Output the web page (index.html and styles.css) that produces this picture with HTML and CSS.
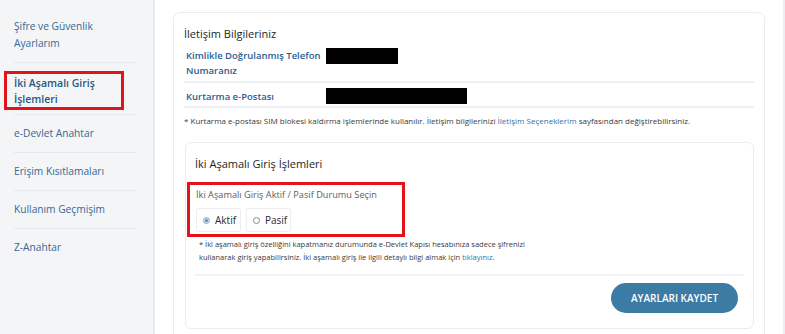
FILE: index.html
```html
<!DOCTYPE html>
<html>
<head>
  <title>Güvenlik Ayarları</title>
  <link rel="stylesheet" href="styles.css">
</head>
<body>
  <div class="sidebar">
    <a class="sideItem" href="#">Şifre ve Güvenlik<br>Ayarlarım</a>
    <div class="sideMarked">
      <a class="sideItem active" href="#">İki Aşamalı Giriş<br>İşlemleri</a>
    </div>
    <a class="sideItem" href="#">e-Devlet Anahtar</a>
    <a class="sideItem" href="#">Erişim Kısıtlamaları</a>
    <a class="sideItem" href="#">Kullanım Geçmişim</a>
    <a class="sideItem last" href="#">Z-Anahtar</a>
  </div>

  <div class="main">
    <div class="outerCard">
      <h3 class="cardTitle">İletişim Bilgileriniz</h3>
      <div class="infoRow">
        <div class="infoLabel">Kimlikle Doğrulanmış Telefon<br>Numaranız</div>
        <div class="infoValue"><span class="masked phoneMask"></span></div>
      </div>
      <div class="infoRow">
        <div class="infoLabel">Kurtarma e-Postası</div>
        <div class="infoValue"><span class="masked mailMask"></span></div>
      </div>
      <p class="note">* Kurtarma e-postası SIM blokesi kaldırma işlemlerinde kullanılır. İletişim bilgilerinizi <a href="#">İletişim Seçeneklerim</a> sayfasından değiştirebilirsiniz.</p>

      <div class="innerCard">
        <h3 class="cardTitle">İki Aşamalı Giriş İşlemleri</h3>
        <div class="markedGroup">
          <div class="groupLabel">İki Aşamalı Giriş Aktif / Pasif Durumu Seçin</div>
          <div class="radios">
            <label class="radioBox"><span class="dot checked"></span>Aktif</label>
            <label class="radioBox"><span class="dot"></span>Pasif</label>
          </div>
        </div>
        <p class="note twoStep">* İki aşamalı giriş özelliğini kapatmanız durumunda e-Devlet Kapısı hesabınıza sadece şifrenizi<br>kullanarak giriş yapabilirsiniz. İki aşamalı giriş ile ilgili detaylı bilgi almak için <a href="#">tıklayınız</a>.</p>
        <div class="actions">
          <button type="button">AYARLARI KAYDET</button>
        </div>
      </div>
    </div>
  </div>
</body>
</html>
```

FILE: styles.css
```css
body {
  margin: 0;
  display: flex;
  min-height: 100vh;
  font-family: "Open Sans", "DejaVu Sans", sans-serif;
  color: #333;
  background-color: #fff;
  overflow: hidden;
}

a {
  text-decoration: none;
}

.sidebar {
  width: 153px;
  flex-shrink: 0;
  background-color: #f3f5f7;
  border-right: 2px solid #e8ebee;
  padding-top: 8px;
  display: flex;
  flex-direction: column;
}

.sideItem {
  display: block;
  margin: 0 17px 0 14px;
  padding: 10px 0;
  font-size: 10.2px;
  line-height: 17px;
  color: #386893;
  border-bottom: 1px solid #e6e9ec;
}

.sideItem.last {
  border-bottom: none;
}

.sideMarked {
  margin: 8px 29px 4px 4px;
  border: 3px solid #e3131b;
  padding: 1px 4px 0 7px;
}

.sideMarked .sideItem {
  margin: 0;
  padding: 0;
  border-bottom: none;
  font-size: 10.5px;
  font-weight: 600;
  line-height: 16px;
  color: #2a5882;
}

.sideMarked + .sideItem {
  border-top: 1px solid #e6e9ec;
}

.main {
  flex: 1;
  padding: 12px 18px 0 18px;
  border-right: 2px solid #eceef0;
}

.outerCard {
  border: 1px solid #ececec;
  border-radius: 7px;
  padding: 11px 10px 0 10px;
  min-height: 330px;
}

.cardTitle {
  margin: 0;
  font-size: 11px;
  font-weight: 400;
  line-height: 20px;
  color: #1e1e1e;
}

.infoRow {
  display: flex;
  align-items: center;
  border-bottom: 2px solid #edf1f5;
  padding: 4px 0 3px 2px;
}

.infoLabel {
  width: 140px;
  flex-shrink: 0;
  font-size: 9.5px;
  font-weight: 600;
  line-height: 15px;
  color: #2b5e8f;
}

.infoRow + .infoRow {
  padding-top: 5px;
  padding-bottom: 2px;
}

.infoValue {
  display: flex;
  align-items: center;
}

.masked {
  display: inline-block;
  background-color: #000;
  height: 16px;
}

.phoneMask {
  width: 72px;
  margin-top: -15px;
}

.mailMask {
  width: 141px;
}

.note {
  margin: 6px 0 0 0;
  font-size: 8px;
  line-height: 14px;
  color: #3a3a3a;
}

.note a {
  color: #3571a6;
}

.innerCard {
  margin: 14px 0 0 1px;
  border: 1px solid #ececec;
  border-radius: 6px;
  padding: 11px 9px 15px 9px;
}

.markedGroup {
  margin: 8px 0 0 -8px;
  width: 218px;
  box-sizing: border-box;
  border: 3px solid #e3131b;
  padding: 2px 6px 2px 6px;
}

.groupLabel {
  font-size: 9.2px;
  line-height: 16px;
  color: #5e5e5e;
}

.radios {
  display: flex;
  gap: 5px;
  margin-top: 5px;
}

.radioBox {
  display: flex;
  align-items: center;
  gap: 5px;
  width: 45px;
  height: 24px;
  box-sizing: border-box;
  border: 1px solid #eeeeee;
  border-radius: 2px;
  padding-left: 6px;
  font-size: 10px;
  color: #2a2a2a;
}

.dot {
  flex-shrink: 0;
  width: 5px;
  height: 5px;
  border-radius: 50%;
  border: 1px solid #888;
  background-color: #fff;
}

.dot.checked {
  border-color: #9cc0d8;
  background-color: #4d8fbb;
  box-shadow: inset 0 0 0 1px #d8e8f2;
}

.twoStep {
  margin: 1px 0 0 4px;
  font-size: 7.5px;
  line-height: 13px;
}

.actions {
  margin-top: 10px;
  border-top: 2px solid #f1f3f5;
  padding-top: 7px;
  display: flex;
  justify-content: flex-end;
  padding-right: 6px;
}

button {
  width: 127px;
  height: 30px;
  border: none;
  border-radius: 15px;
  background-color: #3b7ba4;
  color: #fff;
  font-family: "Open Sans", "DejaVu Sans", sans-serif;
  font-size: 10px;
  font-weight: 600;
  cursor: pointer;
}
```
